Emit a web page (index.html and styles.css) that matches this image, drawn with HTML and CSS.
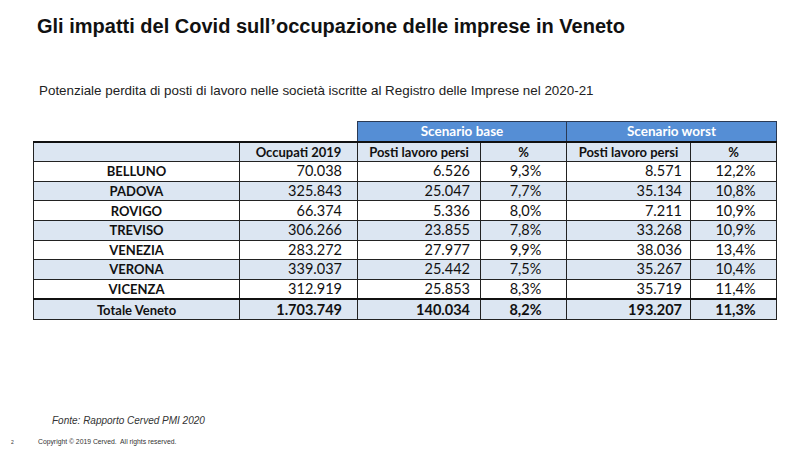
FILE: index.html
```html
<!DOCTYPE html>
<html lang="it">
<head>
<meta charset="utf-8">
<title>Gli impatti del Covid</title>
<link rel="stylesheet" href="styles.css">
</head>
<body>
<div class="slide">
  <h1 class="title">Gli impatti del Covid sull’occupazione delle imprese in Veneto</h1>
  <p class="subtitle">Potenziale perdita di posti di lavoro nelle società iscritte al Registro delle Imprese nel 2020-21</p>
  <table class="data">
    <colgroup>
      <col class="c1"><col class="c2"><col class="c3"><col class="c4"><col class="c5"><col class="c6">
    </colgroup>
    <thead>
      <tr class="scen">
        <th class="blank"></th><th class="blank"></th>
        <th colspan="2" class="blue">Scenario base</th>
        <th colspan="2" class="blue">Scenario worst</th>
      </tr>
      <tr class="head">
        <th></th><th>Occupati 2019</th><th>Posti lavoro persi</th><th>%</th><th>Posti lavoro persi</th><th>%</th>
      </tr>
    </thead>
    <tbody>
      <tr><td class="name">BELLUNO</td><td class="n2">70.038</td><td class="n3">6.526</td><td class="pc">9,3%</td><td class="n5">8.571</td><td class="pc">12,2%</td></tr>
      <tr class="alt"><td class="name">PADOVA</td><td class="n2">325.843</td><td class="n3">25.047</td><td class="pc">7,7%</td><td class="n5">35.134</td><td class="pc">10,8%</td></tr>
      <tr><td class="name">ROVIGO</td><td class="n2">66.374</td><td class="n3">5.336</td><td class="pc">8,0%</td><td class="n5">7.211</td><td class="pc">10,9%</td></tr>
      <tr class="alt"><td class="name">TREVISO</td><td class="n2">306.266</td><td class="n3">23.855</td><td class="pc">7,8%</td><td class="n5">33.268</td><td class="pc">10,9%</td></tr>
      <tr><td class="name">VENEZIA</td><td class="n2">283.272</td><td class="n3">27.977</td><td class="pc">9,9%</td><td class="n5">38.036</td><td class="pc">13,4%</td></tr>
      <tr class="alt"><td class="name">VERONA</td><td class="n2">339.037</td><td class="n3">25.442</td><td class="pc">7,5%</td><td class="n5">35.267</td><td class="pc">10,4%</td></tr>
      <tr><td class="name">VICENZA</td><td class="n2">312.919</td><td class="n3">25.853</td><td class="pc">8,3%</td><td class="n5">35.719</td><td class="pc">11,4%</td></tr>
      <tr class="alt total"><td class="name">Totale Veneto</td><td class="n2">1.703.749</td><td class="n3">140.034</td><td class="pc">8,2%</td><td class="n5">193.207</td><td class="pc">11,3%</td></tr>
    </tbody>
  </table>
  <p class="source">Fonte: Rapporto Cerved PMI 2020</p>
  <div class="footer"><span class="page">2</span><span class="copy">Copyright © 2019 Cerved.&nbsp; All rights reserved.</span></div>
</div>
</body>
</html>
```
FILE: styles.css
```css
html, body {
  margin: 0;
  padding: 0;
  background: #ffffff;
}
.slide {
  width: 800px;
  height: 449px;
  overflow: hidden;
  font-family: "Liberation Sans", Arial, sans-serif;
  color: #000;
  display: flex;
  flex-direction: column;
}
.title {
  margin: 14px 0 0 37px;
  font-size: 20px;
  line-height: 24px;
  font-weight: bold;
  color: #111;
}
.subtitle {
  margin: 45px 0 0 39px;
  font-size: 13.4px;
  line-height: 16px;
  color: #222;
}
.data {
  margin: 22px 0 0 33px;
  border-collapse: collapse;
  table-layout: fixed;
  width: 743px;
  font-family: Lato, "Liberation Sans", sans-serif;
  font-size: 13px;
  color: #111;
}
.c1 { width: 206px; }
.c2 { width: 118px; }
.c3 { width: 123px; }
.c4 { width: 86px; }
.c5 { width: 124px; }
.c6 { width: 86px; }
.data th, .data td {
  height: 18.6px;
  padding: 0;
  line-height: 18px;
  border: 1px solid #222;
  white-space: nowrap;
}
.scen .blank { border: none; background: transparent; }
.scen .blue {
  background: #558ed5;
  color: #fff;
  font-weight: bold;
  font-size: 13.5px;
  border: 1px solid #2a3a55;
}
.head th {
  background: #dce6f2;
  font-weight: bold;
  border-top: 2px solid #111;
}
.name { text-align: center; font-weight: bold; }
.n2, .n3, .n5, .pc { font-size: 14.5px; }
.n2 { text-align: right; padding-right: 15px !important; }
.n3 { text-align: right; padding-right: 10px !important; }
.n5 { text-align: right; padding-right: 8px !important; }
.pc { text-align: center; padding-left: 4px !important; }
tr.alt td { background: #dce6f2; }
tr.total td {
  font-weight: bold;
  border-top: 2px solid #111;
}
.source {
  margin: 95px 0 0 52px;
  font-size: 10px;
  line-height: 12px;
  font-style: italic;
  color: #333;
}
.footer {
  margin: 11px 0 0 11px;
  display: flex;
  align-items: center;
  font-size: 6.8px;
  line-height: 8px;
  color: #333;
}
.page { width: 27px; font-size: 5px; }
```
